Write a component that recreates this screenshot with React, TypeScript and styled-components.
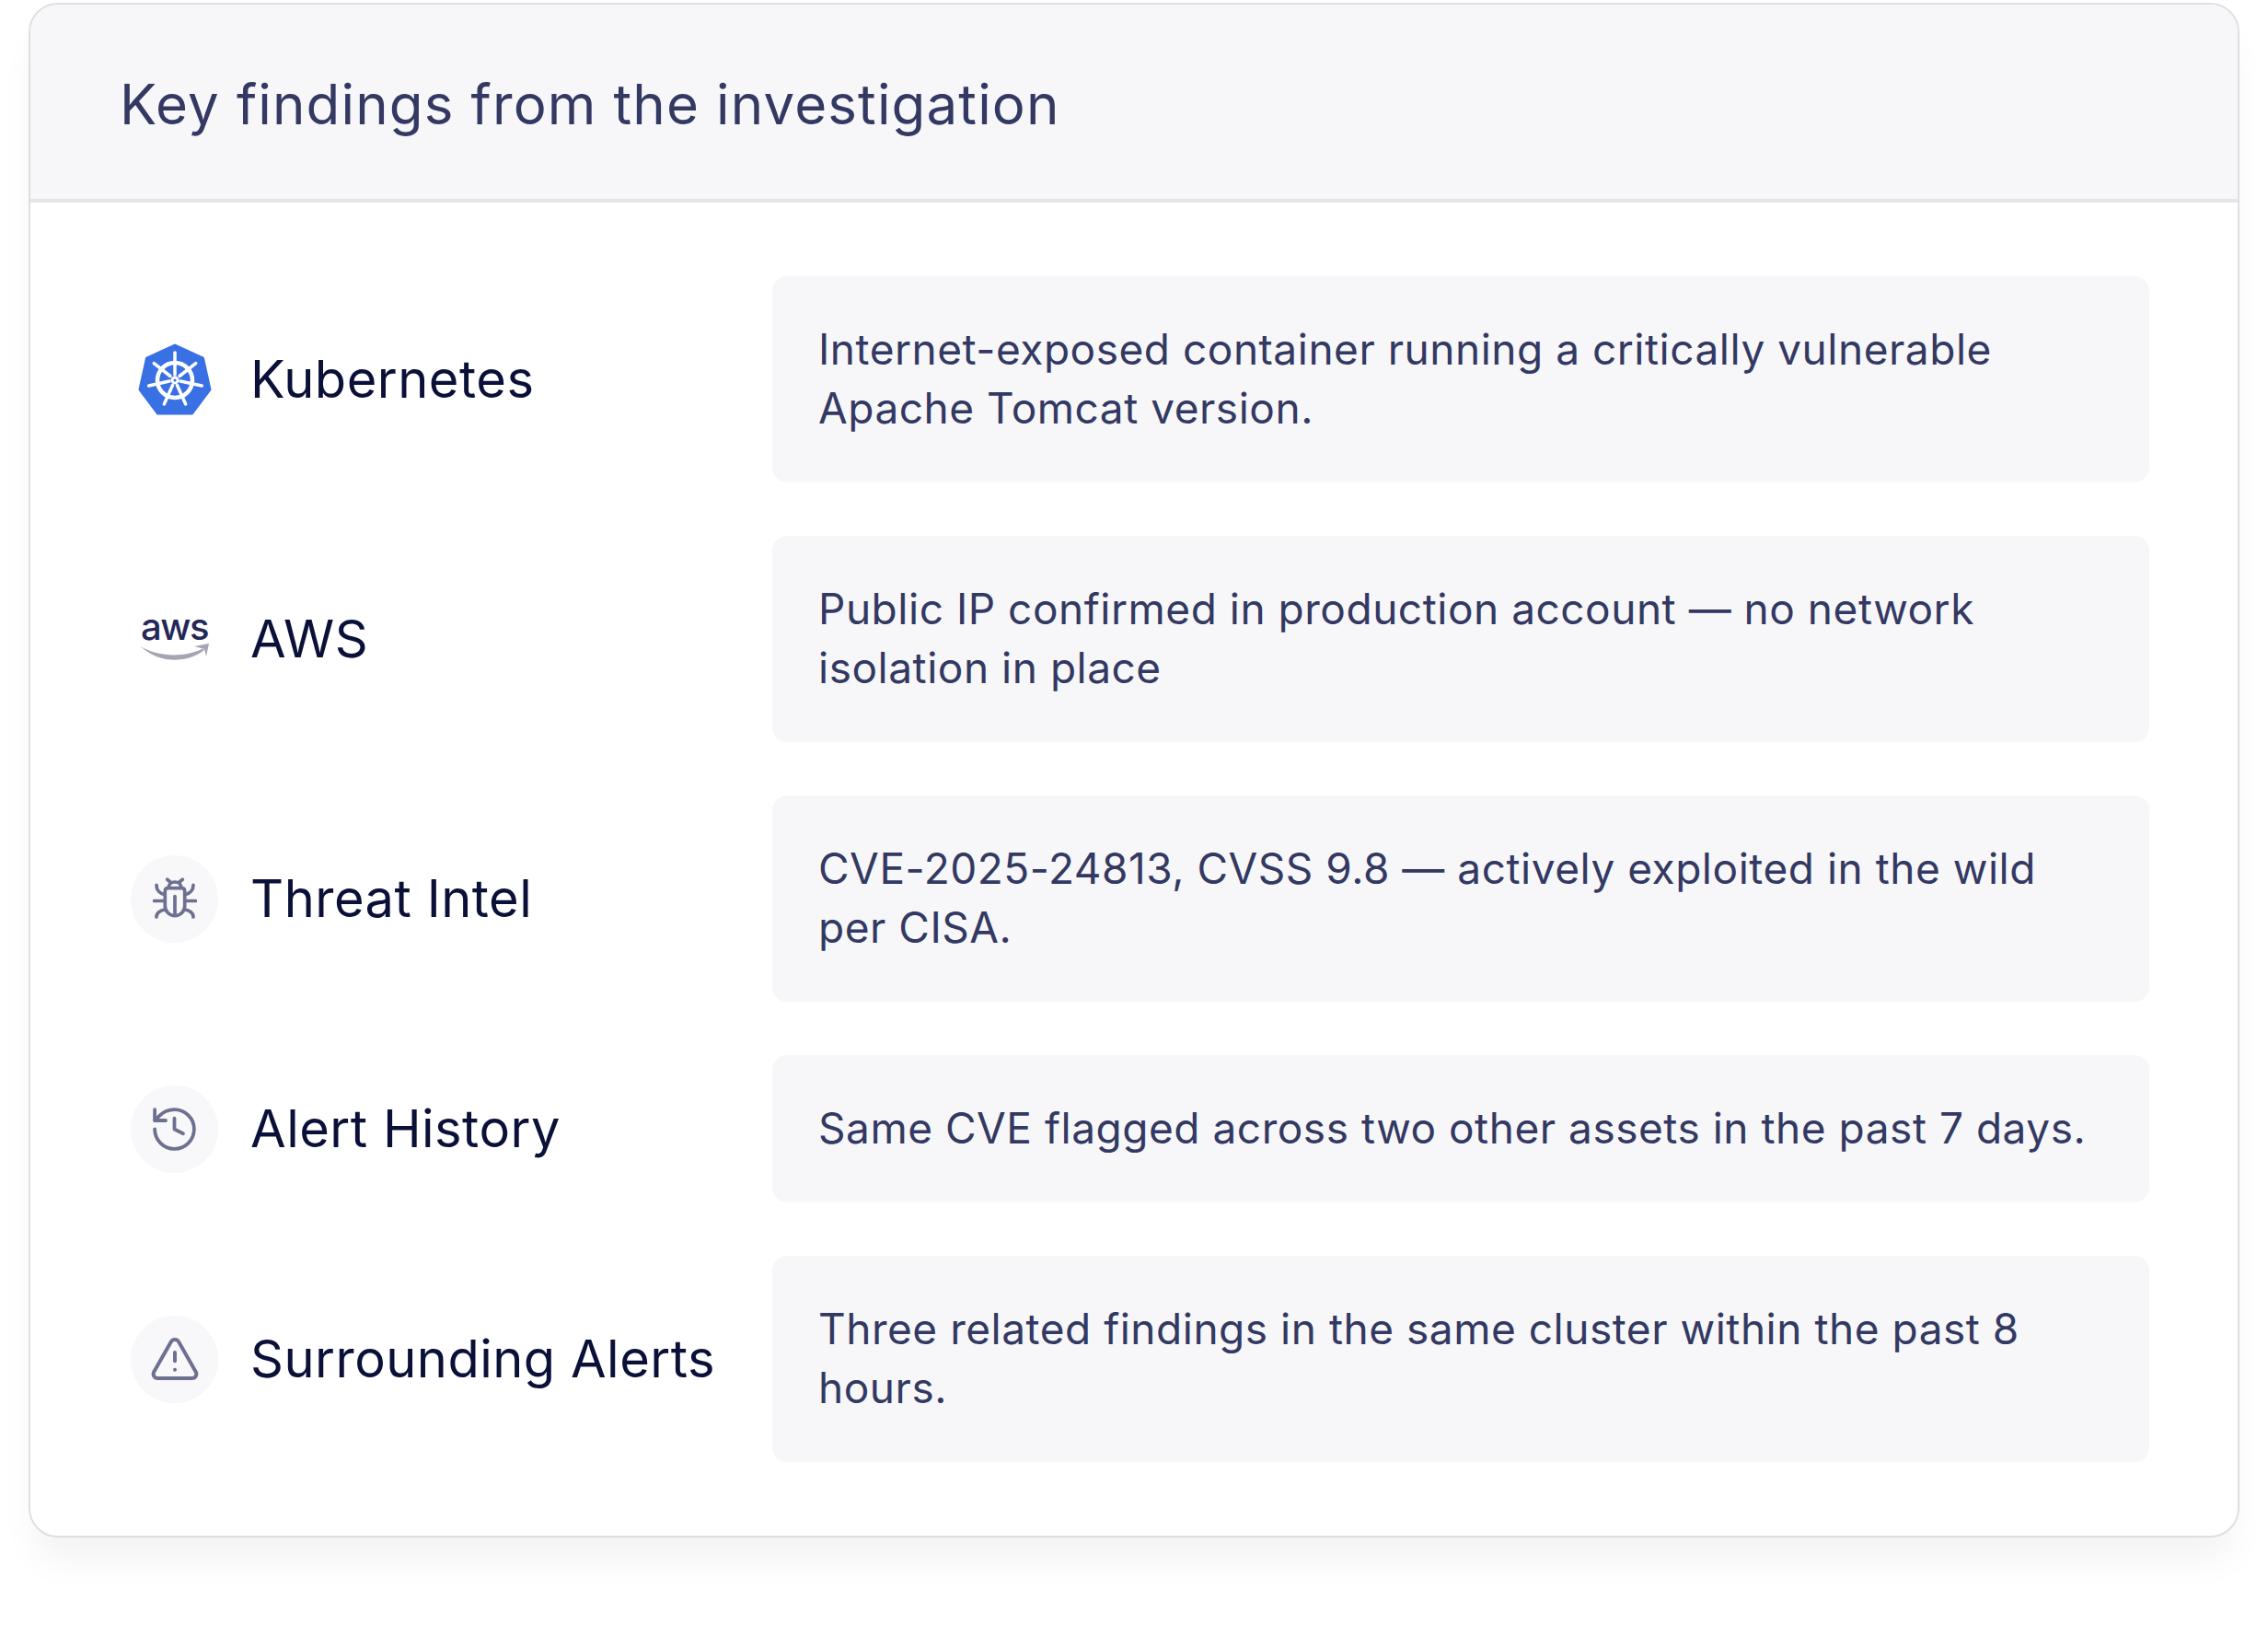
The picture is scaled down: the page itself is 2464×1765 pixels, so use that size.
import { FC, ReactNode } from "react";
import styled, { createGlobalStyle } from "styled-components";
import { History, TriangleAlert } from "lucide-react";

const GlobalStyle = createGlobalStyle`
  html, body {
    margin: 0;
    padding: 0;
    background: #ffffff;
  }
  body {
    font-family: "Inter", "Liberation Sans", sans-serif;
    -webkit-font-smoothing: antialiased;
  }
`;

type Finding = {
  label: string;
  text: ReactNode;
  icon: ReactNode;
  round?: boolean;
};

const KubernetesLogo: FC = () => (
  <svg width="80" height="78" viewBox="0 0 80 78" fill="none">
    <path
      d="M40 2 70.500 16 78 50 58.500 76H21.500L2 50 9.500 16Z"
      fill="#3970e4"
      stroke="#3970e4"
      strokeWidth="3"
      strokeLinejoin="round"
    />
    <circle cx="40" cy="40" r="19" stroke="#fff" strokeWidth="4.500" />
    <path
      d="M40 10V34M62.700 21.700 45 35.500M69.300 46 46 41M51.700 66 42.500 45.500M28.300 66 37.500 45.500M11.700 46 34 41M17.300 21.700 35 35.500"
      stroke="#fff"
      strokeWidth="3.500"
      strokeLinecap="round"
    />
    <circle cx="40" cy="40" r="3" fill="#3970e4" stroke="#fff" strokeWidth="3" />
  </svg>
);

const AwsLogo: FC = () => (
  <AwsSvg width="78" height="50" viewBox="0 0 78 50" fill="none">
    <text
      x="38.500"
      y="26"
      textAnchor="middle"
      fontFamily="Inter, sans-serif"
      fontSize="40"
      fontWeight="500"
      letterSpacing="-1.500"
      fill="#232857"
    >
      aws
    </text>
    <path
      d="M1.500 33C20 44 48 46 69 35.500L71 37C52 52 22 52 1.500 33Z"
      fill="#a5a5b3"
    />
    <path d="M60 33 76 30 73 44 71 36Z" fill="#a5a5b3" />
  </AwsSvg>
);

const BugIcon: FC = () => (
  <svg
    width="48"
    height="48"
    viewBox="0 0 48 48"
    fill="none"
    stroke="#6d7090"
    strokeWidth="3.700"
    strokeLinecap="round"
    strokeLinejoin="round"
  >
    <path d="M15.700 3.300 19 6M32.300 3.300 29 6" />
    <path d="M17.300 12C17.300 8.500 20 6 24 6S30.700 8.500 30.700 12" />
    <path d="M16.500 12.700H31.500C33.500 12.700 34.700 14 34.700 16V32A10.700 10.700 0 0 1 13.300 32V16C13.300 14 14.500 12.700 16.500 12.700Z" />
    <path d="M24 21.600V41" />
    <path d="M4 9.400C4 14 7 18.400 13 19.600M44 9.400C44 14 41 18.400 35 19.600" />
    <path d="M1.500 26.500H13M46.500 26.500H35" />
    <path d="M4 44C4 40 8 36.500 13.300 36M44 44C44 40 40 36.500 34.700 36" />
  </svg>
);

const findings: Finding[] = [
  {
    label: "Kubernetes",
    text: "Internet-exposed container running a critically vulnerable Apache Tomcat version.",
    icon: <KubernetesLogo />,
  },
  {
    label: "AWS",
    text: "Public IP confirmed in production account — no network isolation in place",
    icon: <AwsLogo />,
  },
  {
    label: "Threat Intel",
    text: "CVE-2025-24813, CVSS 9.8 — actively exploited in the wild per CISA.",
    icon: <BugIcon />,
    round: true,
  },
  {
    label: "Alert History",
    text: "Same CVE flagged across two other assets in the past 7 days.",
    icon: <History size={57} color="#6d7090" strokeWidth={1.6} />,
    round: true,
  },
  {
    label: "Surrounding Alerts",
    text: "Three related findings in the same cluster within the past 8 hours.",
    icon: <TriangleAlert size={56} color="#6d7090" strokeWidth={1.7} />,
    round: true,
  },
];

export default function App() {
  return (
    <>
      <GlobalStyle />
      <Page>
        <Card>
          <Header>Key findings from the investigation</Header>
          <Rows>
            {findings.map((item) => (
              <Row key={item.label}>
                <Source>
                  <IconSlot $round={item.round}>{item.icon}</IconSlot>
                  <Label>{item.label}</Label>
                </Source>
                <Description>{item.text}</Description>
              </Row>
            ))}
          </Rows>
        </Card>
      </Page>
    </>
  );
}

const Page = styled.div`
  width: 2464px;
  height: 1765px;
  padding: 3px 31px 0;
  box-sizing: border-box;
  overflow: hidden;
  background: #fff;
`;

const Card = styled.section`
  width: 2402px;
  box-sizing: border-box;
  border: 2px solid #dfdfe3;
  border-radius: 32px;
  background: #fff;
  box-shadow: 0 32px 40px -8px rgba(20, 20, 40, 0.05);
  overflow: hidden;
`;

const Header = styled.h2`
  margin: 0;
  height: 215px;
  box-sizing: border-box;
  padding: 4px 0 0 97px;
  display: flex;
  align-items: center;
  background: #f7f7f9;
  border-bottom: 4px solid #e4e4ea;
  color: #333962;
  font-size: 60px;
  font-weight: 400;
  letter-spacing: 1.15px;
  line-height: 1;
`;

const Rows = styled.div`
  display: flex;
  flex-direction: column;
  gap: 58px;
  padding: 80px 96px 80px 109px;
`;

const Row = styled.div`
  display: flex;
  align-items: center;
`;

const Source = styled.div`
  width: 697px;
  flex: none;
  display: flex;
  align-items: center;
  gap: 35px;
`;

const IconSlot = styled.div<{ $round?: boolean }>`
  width: 95px;
  height: 95px;
  flex: none;
  display: flex;
  align-items: center;
  justify-content: center;
  border-radius: 50%;
  background: ${({ $round }) => ($round ? "#f8f8fa" : "transparent")};
`;

const AwsSvg = styled.svg`
  overflow: visible;
`;

const Label = styled.span`
  color: #0b1038;
  font-size: 56px;
  font-weight: 400;
  letter-spacing: 0.5px;
`;

const Description = styled.p`
  flex: 1;
  margin: 0;
  padding: 47px 50px 49px;
  border-radius: 16px;
  background: #f7f7f9;
  color: #333962;
  font-size: 46px;
  letter-spacing: 0.52px;
  line-height: 64px;
`;
